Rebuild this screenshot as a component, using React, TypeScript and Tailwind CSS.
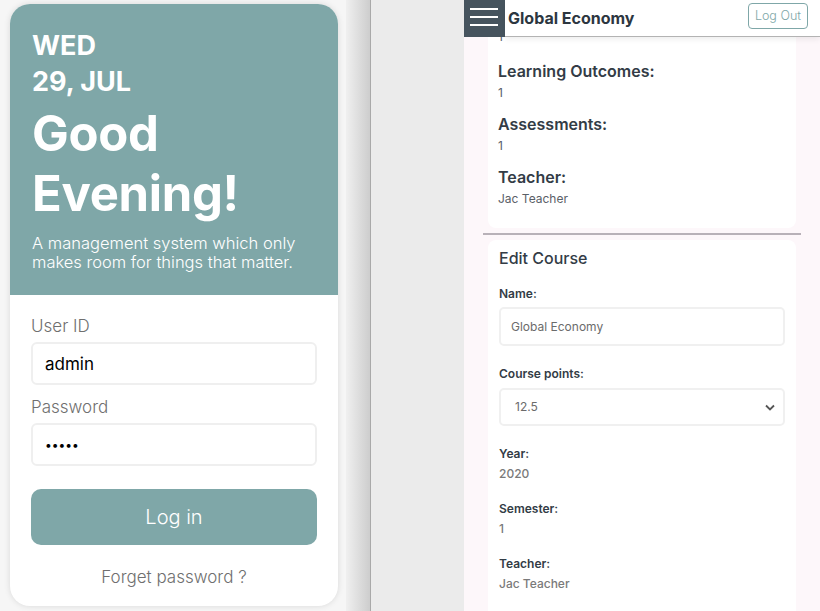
const font = { fontFamily: 'Inter, "Noto Sans", sans-serif' };

const LoginCard = () => {
    return (
        <div className="w-[328px] h-[602px] mt-[4px] ml-[10px] rounded-[20px] bg-white shadow-[0_0_6px_rgba(0,0,0,0.12)] overflow-hidden flex flex-col">
            {/* greeting */}
            <div className="bg-[#7fa7a8] h-[291px] px-[22px] pt-[24px] text-white">
                <div className="text-[27px] leading-[36px] font-bold">WED</div>
                <div className="text-[27px] leading-[36px] font-bold">29, JUL</div>
                <div className="text-[49px] leading-[60px] font-bold mt-[4px] tracking-[-0.3px]">Good</div>
                <div className="text-[49px] leading-[60px] font-bold tracking-[-0.3px]">Evening!</div>
                <p className="text-[16.5px] leading-[19px] font-light mt-[10px]">
                    A management system which only makes room for things that matter.
                </p>
            </div>

            {/* form */}
            <form className="flex flex-col px-[21px] pt-[19px]">
                <label className="text-[17px] leading-[24px] font-light text-[#6f6f6f]">User ID</label>
                <input
                    className="mt-[4px] h-[43px] rounded-[6px] border-2 border-[#efefef] px-[12px] text-[17px] text-black outline-none"
                    defaultValue="admin"
                    name="userId"
                    type="text"
                />
                <label className="mt-[10px] text-[17px] leading-[24px] font-light text-[#6f6f6f]">Password</label>
                <input
                    className="mt-[4px] h-[43px] rounded-[6px] border-2 border-[#efefef] px-[12px] text-[12px] text-black outline-none"
                    defaultValue="admin"
                    name="password"
                    type="password"
                />
                <button
                    className="mt-[23px] h-[56px] rounded-[10px] bg-[#7fa7a8] text-white text-[20px] font-light"
                    type="button"
                >
                    Log in
                </button>
                <div className="mt-[20px] text-center text-[17px] font-light text-[#6f6f6f]">Forget password ?</div>
            </form>
        </div>
    );
};

const Info = ({ label, value }: { label: string; value: string }) => (
    <div className="mb-[10px]">
        <div className="text-[16px] leading-[22px] font-semibold text-[#333c46]">{label}</div>
        <div className="mt-[1px] text-[12px] leading-[20px] text-[#5a6067]">{value}</div>
    </div>
);

const Field = ({ label, value }: { label: string; value: string }) => (
    <div className="mb-[15px]">
        <div className="text-[12px] leading-[20px] font-semibold text-[#333c46]">{label}</div>
        <div className="text-[12px] leading-[20px] font-medium text-[#7a7a7a]">{value}</div>
    </div>
);

const CoursePage = () => {
    return (
        <div className="w-[356px] h-full bg-[#fdf7fa] flex flex-col overflow-hidden">
            {/* header */}
            <div className="relative z-10 h-[37px] flex shrink-0">
                <div className="w-[41px] h-[37px] bg-[#46545e] flex flex-col gap-[6px] pt-[8px] pl-[6px]">
                    <span className="w-[28px] h-[2px] bg-white" />
                    <span className="w-[28px] h-[2px] bg-white" />
                    <span className="w-[28px] h-[2px] bg-white" />
                </div>
                <div className="flex-1 flex items-start bg-white border-b border-[#b3b3b3] shadow-[0_2px_6px_rgba(0,0,0,0.08)]">
                    <span className="ml-[3px] mt-[7px] text-[16px] leading-[22px] font-bold text-[#2c3640]">Global Economy</span>
                    <button
                        className="ml-auto mr-[12px] mt-[3px] h-[26px] px-[6px] rounded-[4px] border border-[#7fa7a8] text-[12.5px] font-light text-[#7fa7a8]"
                        type="button"
                    >
                        Log Out
                    </button>
                </div>
            </div>

            {/* details */}
            <div className="mx-[24px] mt-[-10px] bg-white rounded-b-[8px] px-[10px] pb-[9px]">
                <div className="text-[12px] leading-[20px] text-[#5a6067] mb-[13px]">1</div>
                <Info label="Learning Outcomes:" value="1" />
                <Info label="Assessments:" value="1" />
                <Info label="Teacher:" value="Jac Teacher" />
            </div>

            <div className="mx-[19px] mt-[5px] h-[2px] bg-[#b8b1b8]" />

            {/* edit */}
            <div className="mx-[24px] mt-[5px] bg-white rounded-t-[8px] px-[11px] pt-[7px] flex-1">
                <div className="text-[16px] leading-[22px] font-medium text-[#333c46]">Edit Course</div>

                <div className="mt-[15px] text-[12px] leading-[20px] font-semibold text-[#333c46]">Name:</div>
                <input
                    className="mt-[3px] w-full h-[39px] rounded-[5px] border-2 border-[#f0f0f0] px-[10px] text-[12px] text-[#6b6b6b] outline-none"
                    defaultValue="Global Economy"
                    name="name"
                    type="text"
                />

                <div className="mt-[18px] text-[12px] leading-[20px] font-semibold text-[#333c46]">Course points:</div>
                <div className="mt-[4px] w-full h-[38px] rounded-[5px] border-2 border-[#f0f0f0] pl-[14px] pr-[8px] flex items-center">
                    <span className="text-[12px] text-[#6b6b6b]">12.5</span>
                    <svg className="ml-auto" width="10" height="7" viewBox="0 0 10 7">
                        <path d="M1 1.5 L5 5.5 L9 1.5" fill="none" stroke="#555" strokeWidth="1.8" />
                    </svg>
                </div>

                <div className="mt-[18px]">
                    <Field label="Year:" value="2020" />
                    <Field label="Semester:" value="1" />
                    <Field label="Teacher:" value="Jac Teacher" />
                </div>
            </div>
        </div>
    );
};

const App = () => {
    return (
        <div className="w-[820px] h-[611px] flex overflow-hidden bg-[#f6f6f6]" style={font}>
            <div className="w-[346px] h-full bg-[#f6f6f6] shrink-0">
                <LoginCard />
            </div>
            <div className="w-[24px] h-full shrink-0 bg-gradient-to-r from-[#f0f0f0] to-[#cdcdcd]" />
            <div className="w-[1px] h-full shrink-0 bg-[#a9a9a9]" />
            <div className="w-[93px] h-full shrink-0 bg-[#ebebeb]" />
            <CoursePage />
        </div>
    );
};

export default App;
